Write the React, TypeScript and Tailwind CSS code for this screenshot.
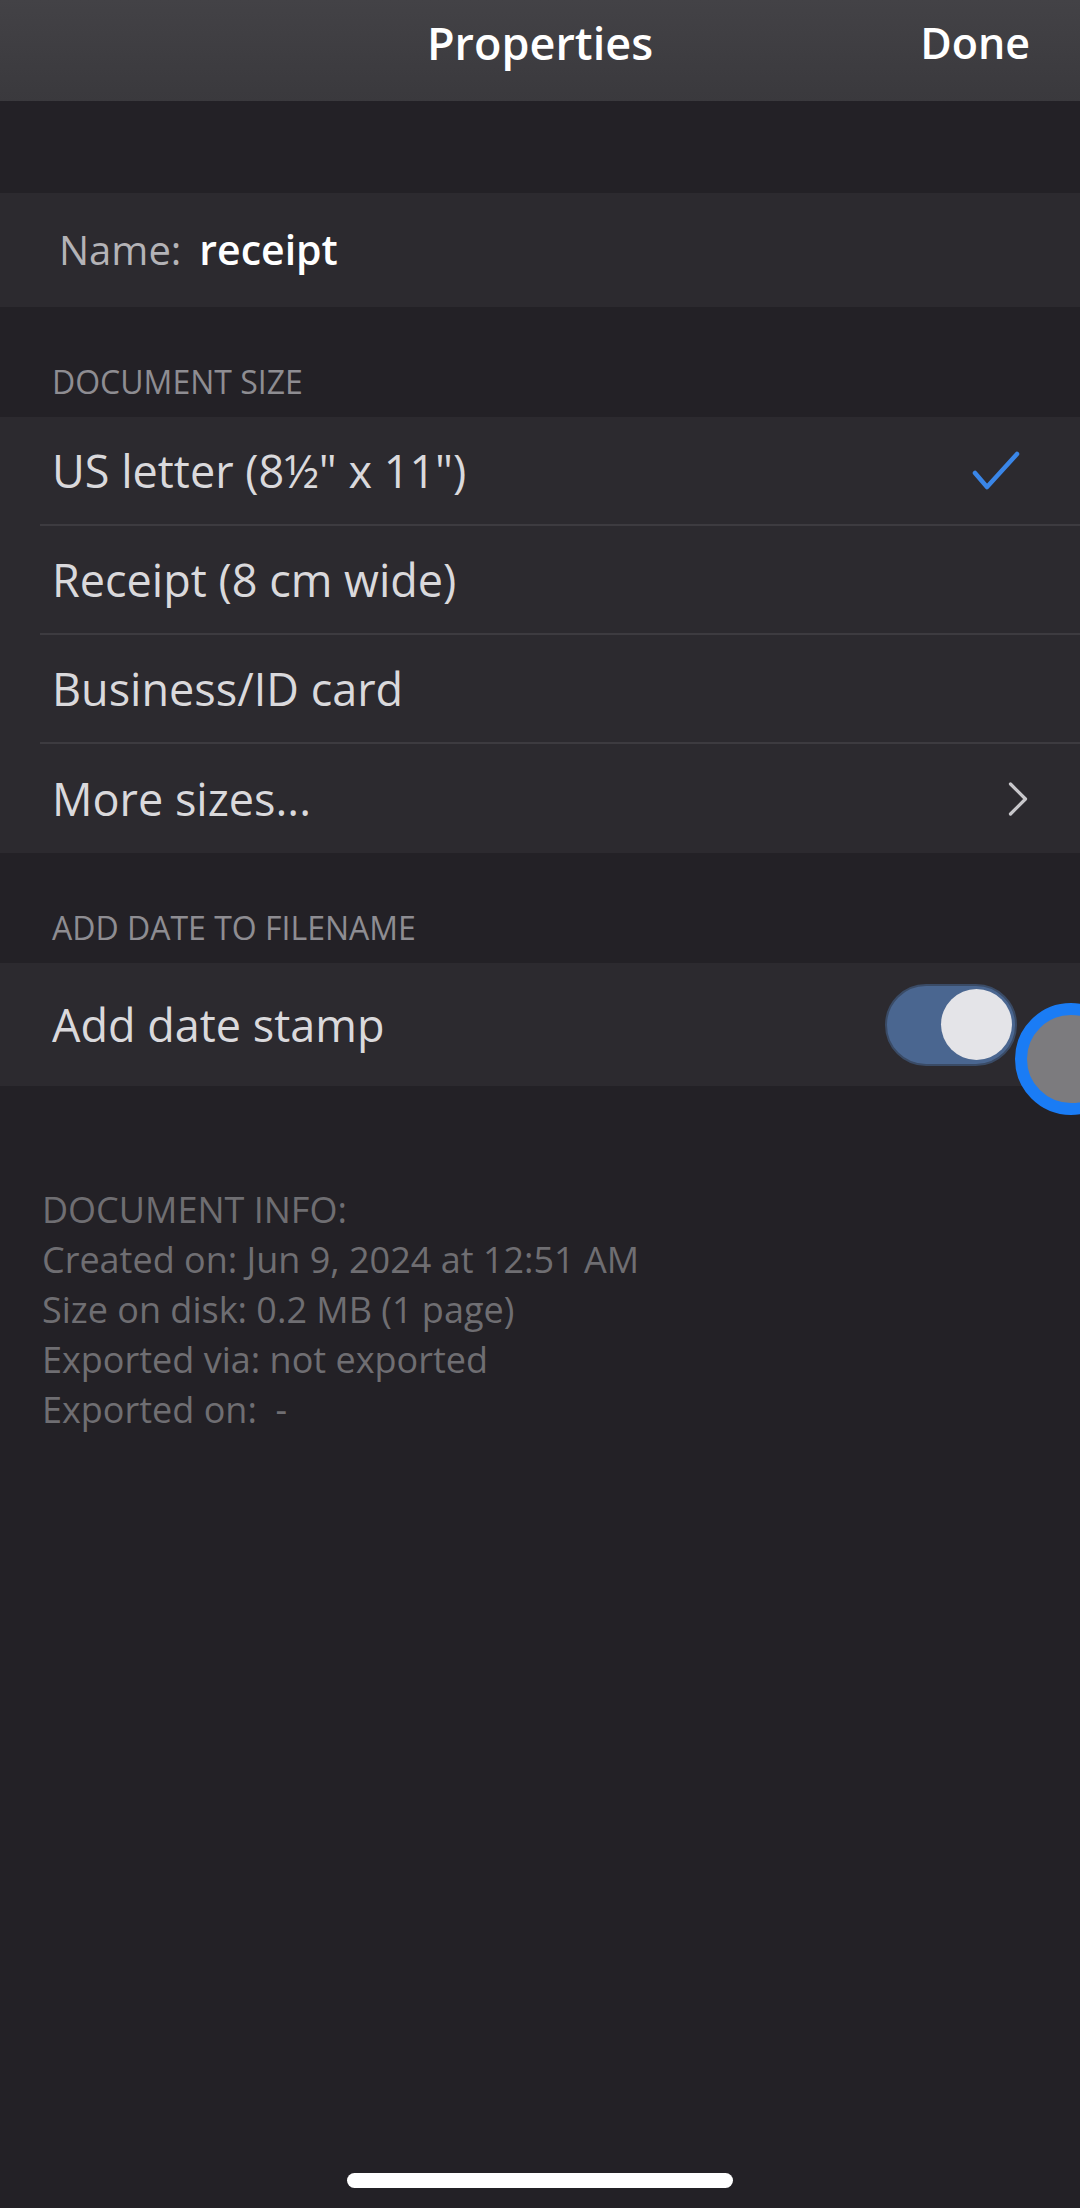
import { ChevronRight } from "lucide-react";

const sizes = [
  { label: 'US letter (8½" x 11")', selected: true },
  { label: "Receipt (8 cm wide)" },
  { label: "Business/ID card" },
  { label: "More sizes...", more: true },
];

const info = [
  "DOCUMENT INFO:",
  "Created on: Jun 9, 2024 at 12:51 AM",
  "Size on disk: 0.2 MB (1 page)",
  "Exported via: not exported",
  "Exported on:  -",
];

function SectionLabel({ children }: { children: string }) {
  return (
    <div className="h-[110px] flex items-end pb-[11px] pl-[52px] text-[32px] text-[#8e8d92]">
      {children}
    </div>
  );
}

export default function App() {
  return (
    <div
      className="w-[1080px] h-[2208px] bg-[#232126] flex flex-col relative overflow-hidden"
      style={{ fontFamily: '"Open Sans", "Noto Sans", sans-serif' }}
    >
      {/* Top bar */}
      <header className="h-[101px] bg-gradient-to-b from-[#434246] to-[#3a393d] flex items-center justify-center relative pb-[16px]">
        <span className="text-[45px] font-semibold text-white">Properties</span>
        <button className="absolute right-[50px] top-[11px] text-[43px] font-semibold text-white">
          Done
        </button>
      </header>

      <div className="h-[92px]" />

      {/* Name */}
      <div className="h-[114px] bg-[#2c2a2f] flex items-center pl-[59px] gap-[18px] text-[40px]">
        <span className="text-[#b4b3b7]">Name:</span>
        <span className="text-white font-semibold text-[41px]">receipt</span>
      </div>

      <SectionLabel>DOCUMENT SIZE</SectionLabel>

      <div className="bg-[#2c2a2f]">
        {sizes.map((s, i) => (
          <div key={s.label} className="pl-[40px]">
            <div
              className={`h-[109px] flex items-center justify-between pl-[12px] pr-[52px] ${
                i < sizes.length - 1 ? "border-b-2 border-[#3d3b40]" : ""
              }`}
            >
              <span className="text-[45px] font-medium text-[#dad9dc]">{s.label}</span>
              {s.selected && (
                <svg width="48" height="40" viewBox="0 0 48 40" fill="none" className="mr-[8px]">
                  <path d="M3 22 L15 36 L45 3" stroke="#3a86e8" strokeWidth="4.5" strokeLinecap="round" strokeLinejoin="round" />
                </svg>
              )}
              {s.more && <ChevronRight className="w-[60px] h-[60px] text-[#c8c7cb] -mr-[20px]" strokeWidth={1.3} />}
            </div>
          </div>
        ))}
      </div>

      <SectionLabel>ADD DATE TO FILENAME</SectionLabel>

      {/* Date stamp toggle */}
      <div className="h-[123px] bg-[#2c2a2f] flex items-center justify-between pl-[52px] pr-[63px]">
        <span className="text-[45px] font-medium text-[#dad9dc]">Add date stamp</span>
        <div className="w-[132px] h-[82px] rounded-full bg-[#4a6690] border-2 border-[#3a4b66] flex items-center justify-end pr-[3px]">
          <div className="w-[71px] h-[71px] rounded-full bg-[#e4e4e8]" />
        </div>
      </div>

      {/* Touch indicator */}
      <div className="absolute left-[1015px] top-[1003px] w-[112px] h-[112px] rounded-full border-[12px] border-[#1a7cf5] bg-[#7c7b7e]" />

      {/* Document info */}
      <div className="pt-[99px] pl-[42px] text-[36px] leading-[50px] text-[#6f6e72]">
        {info.map((line) => (
          <div key={line} className="whitespace-pre">
            {line}
          </div>
        ))}
      </div>

      {/* Home indicator */}
      <div className="absolute left-[347px] top-[2173px] w-[386px] h-[15px] rounded-full bg-white" />
    </div>
  );
}
